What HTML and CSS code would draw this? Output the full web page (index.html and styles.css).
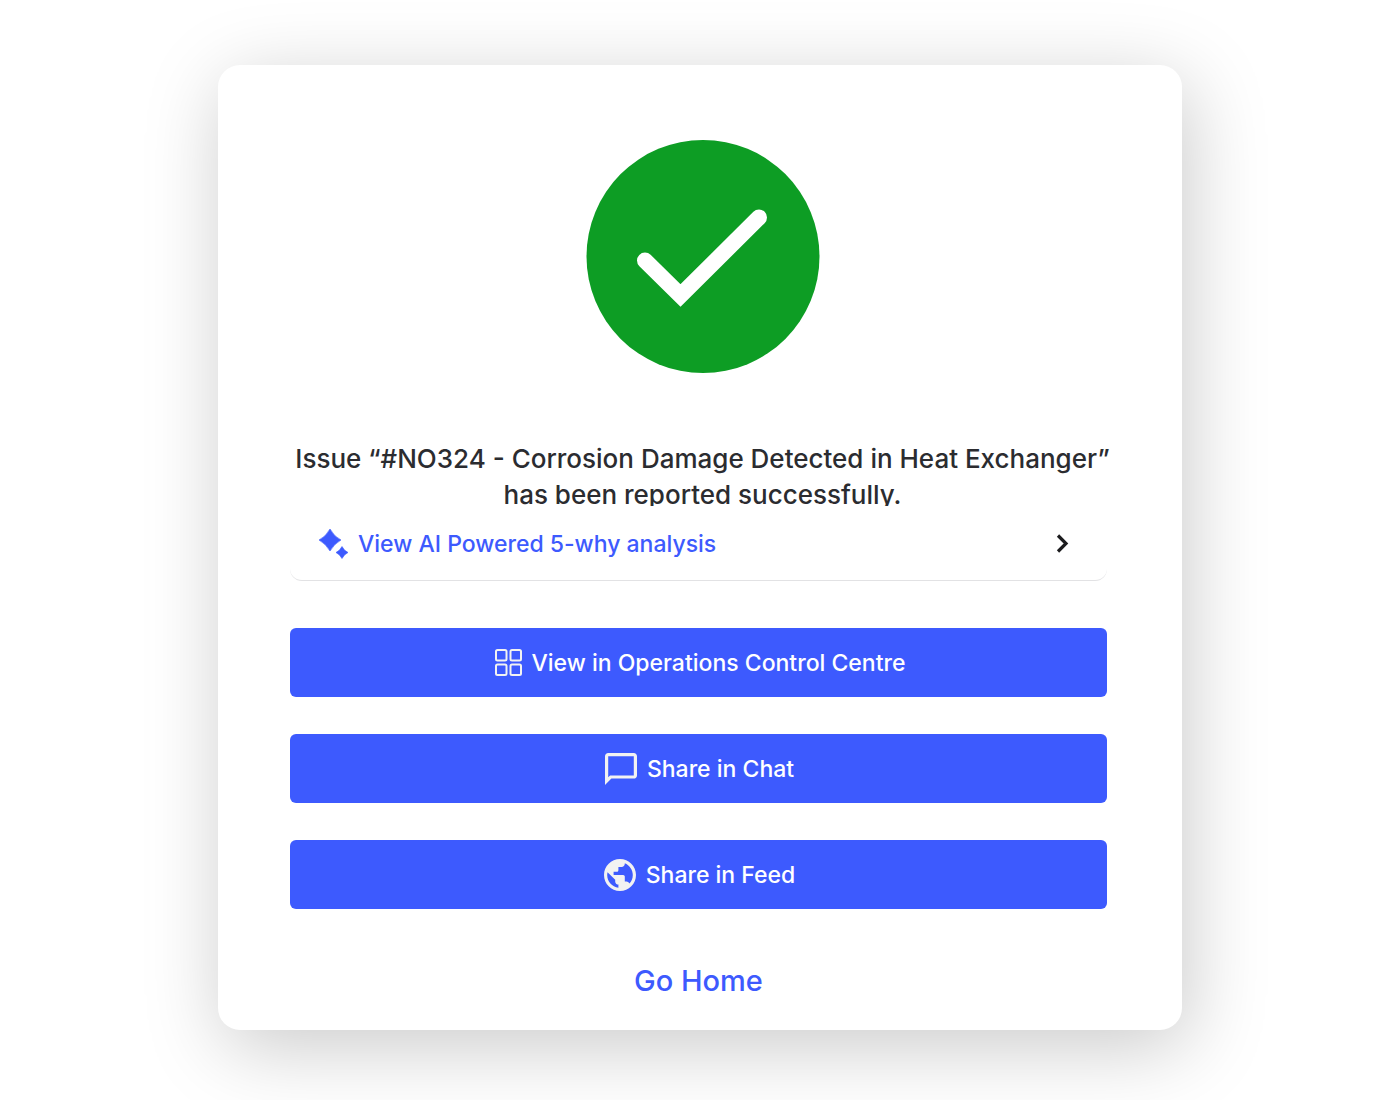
FILE: index.html
```html
<!DOCTYPE html>
<html lang="en">
<head>
<meta charset="utf-8">
<meta name="viewport" content="width=device-width, initial-scale=1">
<title>Issue reported</title>
<link rel="stylesheet" href="styles.css">
</head>
<body>
<main class="card">
  <header class="summary">
    <svg class="success-icon" viewBox="0 0 234 234" aria-hidden="true">
      <circle cx="117" cy="116.500" r="116.500" fill="#0d9d24"/>
      <path d="M59 120.500 94.500 155.500 173 77.500" fill="none" stroke="#fff" stroke-width="16" stroke-linecap="round"/>
    </svg>
    <h1 class="title">Issue “#NO324 - Corrosion Damage Detected in Heat Exchanger” <br>has been reported successfully.</h1>
  </header>
  <a class="analysis" href="#analysis">
    <svg class="sparkle" viewBox="0 0 30 30" aria-hidden="true">
      <path d="M12 0Q16.500 8 23 11Q16.500 14.500 12 22Q7.500 14.500 1 11Q7.500 8 12 0ZM24 17.500Q26.300 22 30 23.500Q26.300 25.300 24 29.500Q21.700 25.300 18 23.500Q21.700 22 24 17.500Z" fill="currentColor" stroke="currentColor" stroke-width="0.600" stroke-linejoin="round"/>
    </svg>
    <span class="analysis-label">View AI Powered 5-why analysis</span>
    <svg class="chevron" viewBox="0 0 14 20" aria-hidden="true">
      <path d="M3 1.500 11 9.500 3 17.500" fill="none" stroke="currentColor" stroke-width="3.200"/>
    </svg>
  </a>
  <div class="actions">
    <button class="action" type="button">
      <svg class="icon-grid" viewBox="0 0 28 28" fill="none" stroke="currentColor" stroke-width="2" aria-hidden="true">
        <rect x="2" y="1" width="10.500" height="10.500" rx="1.500"/>
        <rect x="16.500" y="1" width="10.500" height="10.500" rx="1.500"/>
        <rect x="2" y="15.500" width="10.500" height="10.500" rx="1.500"/>
        <rect x="16.500" y="15.500" width="10.500" height="10.500" rx="1.500"/>
      </svg>
      View in Operations Control Centre
    </button>
    <button class="action" type="button">
      <svg class="icon" viewBox="2 2 20 20" aria-hidden="true">
        <path fill="currentColor" d="M20 2H4c-1.100 0-2 .9-2 2v18l4-4h14c1.100 0 2-.9 2-2V4c0-1.100-.9-2-2-2zm0 14H5.170L4 17.170V4h16v12z"/>
      </svg>
      Share in Chat
    </button>
    <button class="action" type="button">
      <svg class="icon" viewBox="2 2 20 20" aria-hidden="true">
        <path fill="currentColor" d="M12 2C6.480 2 2 6.480 2 12s4.480 10 10 10 10-4.480 10-10S17.520 2 12 2zm-1 17.930c-3.950-.49-7-3.850-7-7.930 0-.62.080-1.210.21-1.790L9 15v1c0 1.100.9 2 2 2v1.930zm6.900-2.540c-.26-.81-1-1.390-1.900-1.390h-1v-3c0-.55-.45-1-1-1H8v-2h2c.55 0 1-.45 1-1V7h2c1.100 0 2-.9 2-2v-.41c2.930 1.190 5 4.060 5 7.410 0 2.080-.8 3.970-2.100 5.390z"/>
      </svg>
      Share in Feed
    </button>
  </div>
  <a class="home" href="#home">Go Home</a>
</main>
</body>
</html>
```
FILE: styles.css
```css
* {
  box-sizing: border-box;
}

body {
  min-height: 100vh;
  margin: 0;
  padding: 65px 24px 70px;
  background: #fff;
  color: #2b2c30;
  font-family: Inter, "Liberation Sans", sans-serif;
  font-weight: 500;
}

.card {
  display: flex;
  flex-direction: column;
  max-width: 964px;
  margin: 0 auto;
  padding: 75px 75px 29px 72px;
  border-radius: 22px;
  background: #fff;
  box-shadow: 6px 17px 80px rgba(0, 0, 0, 0.21);
}

.summary {
  display: flex;
  flex-direction: column;
  align-items: center;
  gap: 67px;
  margin: 0 -4px 0 4px;
}

.success-icon {
  width: 234px;
  height: 234px;
}

.title {
  margin: 0;
  font-size: 26px;
  font-weight: inherit;
  line-height: 36px;
  text-align: center;
}

/* The row sits slightly over the title's last line. */
.analysis {
  position: relative;
  display: flex;
  align-items: center;
  gap: 10px;
  height: 75px;
  margin-top: -7px;
  padding: 1px 38px 0 28px;
  border-bottom: 1px solid #e2e2e4;
  border-radius: 0 0 12px 12px;
  background: #fff;
  color: #3d5afe;
  font-size: 23px;
  line-height: 32px;
  text-decoration: none;
}

.sparkle {
  flex: none;
  width: 30px;
  height: 30px;
}

.analysis-label {
  flex: 1;
}

.chevron {
  flex: none;
  width: 14px;
  height: 20px;
  color: #1c1c1e;
}

.actions {
  display: grid;
  gap: 37px;
  margin-top: 47px;
}

.action {
  display: flex;
  align-items: center;
  justify-content: center;
  gap: 10px;
  height: 69px;
  padding: 0 14px 0 16px;
  border: 0;
  border-radius: 6px;
  background: #3d5afe;
  color: #fff;
  font: inherit;
  font-size: 23px;
  line-height: 32px;
  cursor: pointer;
}

.icon,
.icon-grid {
  flex: none;
  width: 32px;
  height: 32px;
  color: #f2f2f2;
}

.icon-grid {
  width: 28px;
  height: 28px;
}

.home {
  align-self: center;
  margin-top: 52px;
  color: #3d5afe;
  font-size: 29px;
  line-height: 40px;
  text-decoration: none;
}
```
